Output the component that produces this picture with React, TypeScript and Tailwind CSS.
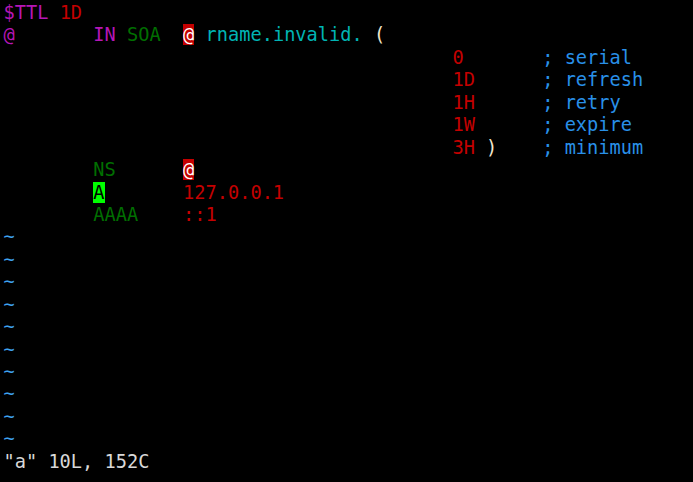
type Seg = { t: string; c?: string }

const MAG = 'text-[#b616b6]'
const RED = 'text-[#c40000]'
const GRN = 'text-[#006f00]'
const CYN = 'text-[#00b4b4]'
const BLU = 'text-[#2990e8]'
const PAREN = 'text-[#f2e6cc]'

function Line({ segs }: { segs: Seg[] }) {
  return (
    <div className="h-[22.45px] leading-[22.45px] whitespace-pre">
      {segs.map((s, i) => (
        <span key={i} className={s.c}>
          {s.t}
        </span>
      ))}
    </div>
  )
}

const soaRows = [
  { v: '0', extra: '', note: 'serial' },
  { v: '1D', extra: '', note: 'refresh' },
  { v: '1H', extra: '', note: 'retry' },
  { v: '1W', extra: '', note: 'expire' },
  { v: '3H', extra: ' )', note: 'minimum' },
]

export default function App() {
  const hl = 'bg-[#c40000] text-white'
  return (
    <div className="w-[693px] h-[482px] bg-black overflow-hidden pl-[3.5px] pt-[2px] text-[18.65px] font-['DejaVu_Sans_Mono',monospace]">
      <Line segs={[{ t: '$TTL', c: MAG }, { t: ' ' }, { t: '1D', c: RED }]} />
      <Line
        segs={[
          { t: '@', c: MAG },
          { t: '       ' },
          { t: 'IN', c: MAG },
          { t: ' ' },
          { t: 'SOA', c: GRN },
          { t: '  ' },
          { t: '@', c: hl },
          { t: ' ' },
          { t: 'rname.invalid.', c: CYN },
          { t: ' ' },
          { t: '(', c: PAREN },
        ]}
      />
      {soaRows.map((r) => (
        <Line
          key={r.note}
          segs={[
            { t: ' '.repeat(40) },
            { t: r.v, c: RED },
            { t: r.extra, c: PAREN },
            { t: ' '.repeat(8 - r.v.length - r.extra.length) },
            { t: '; ' + r.note, c: BLU },
          ]}
        />
      ))}
      <Line segs={[{ t: '        ' }, { t: 'NS', c: GRN }, { t: '      ' }, { t: '@', c: hl }]} />
      <Line
        segs={[
          { t: '        ' },
          { t: 'A', c: 'bg-[#00ff00] text-black' },
          { t: '       ' },
          { t: '127.0.0.1', c: RED },
        ]}
      />
      <Line segs={[{ t: '        ' }, { t: 'AAAA', c: GRN }, { t: '    ' }, { t: '::1', c: RED }]} />
      {Array.from({ length: 10 }).map((_, i) => (
        <Line key={i} segs={[{ t: '~', c: 'text-[#3fa4f0]' }]} />
      ))}
      <Line segs={[{ t: '"a" 10L, 152C', c: 'text-[#d8d8d8]' }]} />
    </div>
  )
}
